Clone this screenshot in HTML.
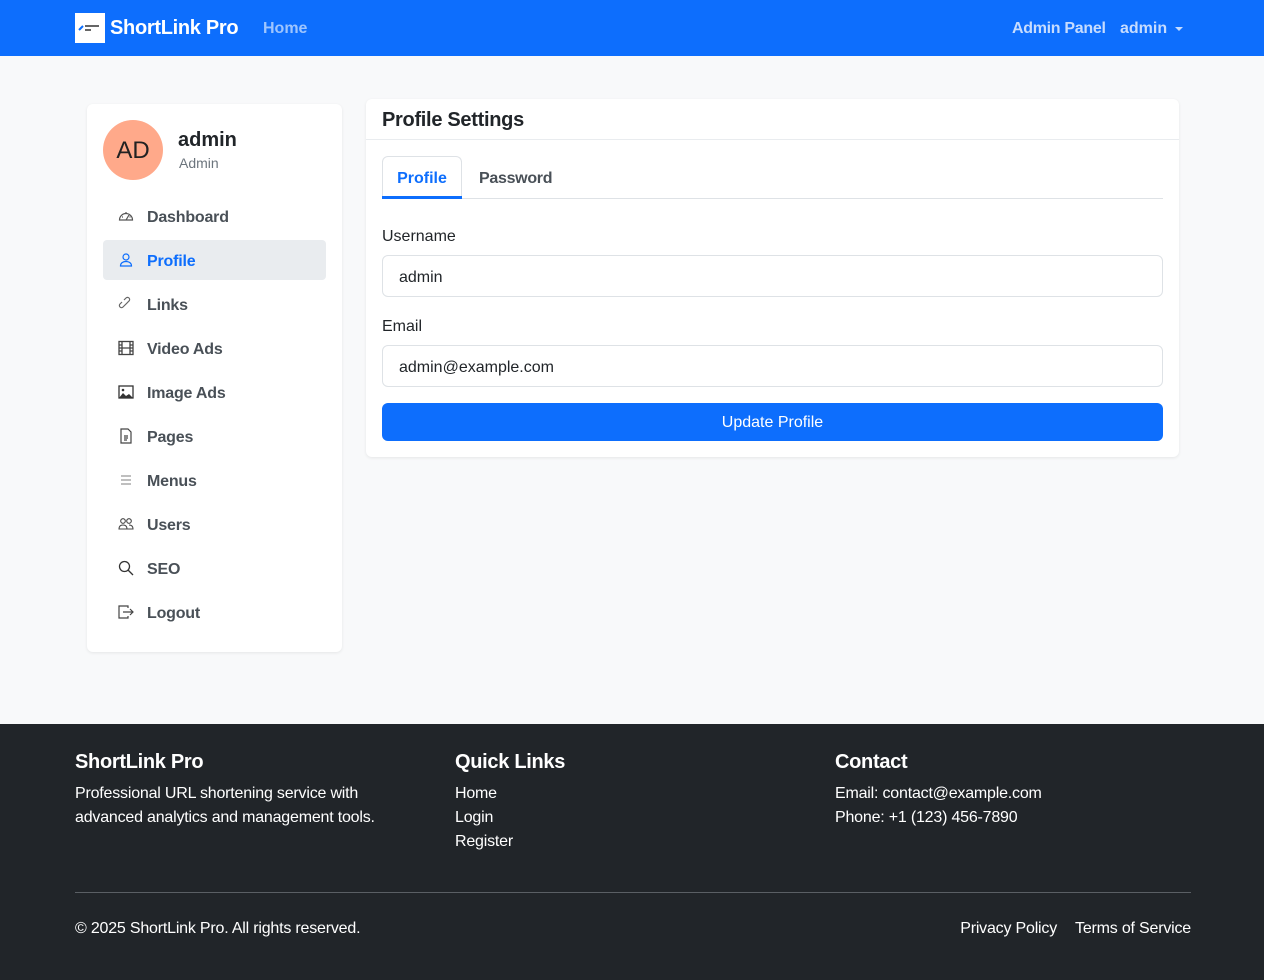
<!DOCTYPE html>
<html><head><meta charset="utf-8"><style>
*{box-sizing:border-box;margin:0;padding:0}
body{width:1264px;height:980px;background:#f8f9fa;font-family:"Liberation Sans",sans-serif;color:#212529;position:relative;overflow:hidden;font-size:16px}
.nav{position:absolute;left:0;top:0;width:1264px;height:56px;background:#0d6efd}
.abs{position:absolute;white-space:nowrap}
.card{position:absolute;background:#fff;border-radius:6px;box-shadow:0 1px 3px rgba(0,0,0,.08)}
.item{position:absolute;left:16px;width:223px;height:40px;border-radius:4px;font-size:16px;font-weight:bold;color:#495057;line-height:44px;padding-left:44px;letter-spacing:-0.2px}
.item svg{position:absolute;left:15px;top:12px}
.input{position:absolute;left:16px;width:781px;height:42px;border:1px solid #dee2e6;border-radius:6px;padding-left:16px;line-height:43px;font-size:16px}
.foot{position:absolute;left:0;top:724px;width:1264px;height:256px;background:#212529;color:#fff}
.foot .abs{font-size:16px;letter-spacing:-0.2px}
.foot h5{position:absolute;font-size:20px;font-weight:bold;letter-spacing:-0.3px}
</style></head><body>
<div class="nav">
 <div class="abs" style="left:75px;top:13px;width:30px;height:30px;background:#fff"><svg width="30" height="30"><path d="M4 17l4-4" stroke="#0d6efd" stroke-width="2"/><rect x="10" y="12" width="14" height="2" fill="#666"/><rect x="10" y="16" width="6" height="2" fill="#666"/></svg></div>
 <div class="abs" style="left:110px;top:17px;font-size:20px;font-weight:bold;color:#fff;letter-spacing:-0.3px">ShortLink Pro</div>
 <div class="abs" style="left:263px;top:20px;font-size:16px;font-weight:bold;color:#9ec5fe">Home</div>
 <div class="abs" style="left:1012px;top:20px;font-size:16px;font-weight:bold;color:#c6dcfe;letter-spacing:-0.3px">Admin Panel</div>
 <div class="abs" style="left:1120px;top:20px;font-size:16px;font-weight:bold;color:#c6dcfe">admin</div>
 <div class="abs" style="left:1175px;top:27px;border-left:4px solid transparent;border-right:4px solid transparent;border-top:4px solid #c6dcfe"></div>
</div>

<div class="card" style="left:87px;top:104px;width:255px;height:548px">
 <div class="abs" style="left:16px;top:16px;width:60px;height:60px;border-radius:50%;background:#ffa98a;font-size:24px;text-align:center;line-height:62px;color:#222">AD</div>
 <div class="abs" style="left:91px;top:25px;font-size:20px;font-weight:bold">admin</div>
 <div class="abs" style="left:92px;top:51px;font-size:14px;color:#6c757d">Admin</div>
 <div class="item" style="top:92px"><svg width="16" height="16" viewBox="0 0 16 16" fill="none" stroke="#555" stroke-width="1.2"><path d="M1.5 12a6.5 6.5 0 1 1 13 0zM8 12l3-5M4 9h1M11.5 9h1M8 4v1"/></svg>Dashboard</div>
 <div class="item" style="top:136px;background:#e9ecef;color:#0d6efd"><svg width="16" height="16" viewBox="0 0 16 16" fill="none" stroke="#0d6efd" stroke-width="1.2"><circle cx="8" cy="5" r="3"/><path d="M2.5 14c0-3 2.5-4.5 5.5-4.5s5.5 1.5 5.5 4.5z"/></svg>Profile</div>
 <div class="item" style="top:180px"><svg width="16" height="16" viewBox="0 0 16 16" fill="none" stroke="#666" stroke-width="1.2"><path d="M7 9l-2 2a2 2 0 0 1-3-3l2-2M9 7l2-2a2 2 0 0 0-3-3L6 4M6 10l4-4"/></svg>Links</div>
 <div class="item" style="top:224px"><svg width="16" height="16" viewBox="0 0 16 16" fill="none" stroke="#444" stroke-width="1.3"><rect x="1" y="1.5" width="14" height="13"/><path d="M4 1.5v13M12 1.5v13M1 8h14M1 5h3M1 11h3M12 5h3M12 11h3"/></svg>Video Ads</div>
 <div class="item" style="top:268px"><svg width="16" height="16" viewBox="0 0 16 16"><rect x="1" y="2" width="14" height="12" fill="none" stroke="#333" stroke-width="1.3"/><path d="M1 14l4-5 3 3 3-2 4 4z" fill="#333"/><circle cx="5" cy="6" r="1.3" fill="#333"/></svg>Image Ads</div>
 <div class="item" style="top:312px"><svg width="16" height="16" viewBox="0 0 16 16" fill="none" stroke="#444" stroke-width="1.2"><path d="M3 1h7l3 3v11H3zM6 8h4M6 10h4M6 12h3"/></svg>Pages</div>
 <div class="item" style="top:356px"><svg width="16" height="16" viewBox="0 0 16 16" fill="none" stroke="#999" stroke-width="1.2"><path d="M3 4h10M3 8h10M3 12h10"/></svg>Menus</div>
 <div class="item" style="top:400px"><svg width="16" height="16" viewBox="0 0 16 16" fill="none" stroke="#444" stroke-width="1.1"><circle cx="5" cy="5" r="2.3"/><circle cx="11" cy="5" r="2.3"/><path d="M1 13c0-3 2-4 4-4s4 1 4 4zM9 13h6c0-3-2-4-4-4"/></svg>Users</div>
 <div class="item" style="top:444px"><svg width="16" height="16" viewBox="0 0 16 16" fill="none" stroke="#333" stroke-width="1.3"><circle cx="6.5" cy="6.5" r="5"/><path d="M10 10l5 5"/></svg>SEO</div>
 <div class="item" style="top:488px"><svg width="16" height="16" viewBox="0 0 16 16" fill="none" stroke="#444" stroke-width="1.2"><path d="M10 4V2H1v12h9v-2M5 8h10M12 5l3 3-3 3"/></svg>Logout</div>
</div>

<div class="card" style="left:366px;top:99px;width:813px;height:358px">
 <div class="abs" style="left:16px;top:10px;font-size:20px;font-weight:bold;letter-spacing:-0.3px">Profile Settings</div>
 <div class="abs" style="left:0;top:40px;width:813px;border-top:1px solid #e9ecef"></div>
 <div class="abs" style="left:16px;top:57px;width:80px;height:43px;border:1px solid #dee2e6;border-bottom:none;border-radius:6px 6px 0 0;color:#0d6efd;font-weight:bold;text-align:center;line-height:44px">Profile</div>
 <div class="abs" style="left:16px;top:97px;width:80px;height:3px;background:#0d6efd"></div>
 <div class="abs" style="left:113px;top:71px;font-weight:bold;color:#495057;letter-spacing:-0.3px">Password</div>
 <div class="abs" style="left:96px;top:99px;width:701px;border-top:1px solid #dee2e6"></div>
 <div class="abs" style="left:16px;top:129px">Username</div>
 <div class="input" style="top:156px">admin</div>
 <div class="abs" style="left:16px;top:219px">Email</div>
 <div class="input" style="top:246px">admin@example.com</div>
 <div class="abs" style="left:16px;top:304px;width:781px;height:38px;background:#0d6efd;border-radius:6px;color:#fff;text-align:center;line-height:40px">Update Profile</div>
</div>

<div class="foot">
 <h5 style="left:75px;top:27px">ShortLink Pro</h5>
 <div class="abs" style="left:75px;top:58px;line-height:24px">Professional URL shortening service with<br>advanced analytics and management tools.</div>
 <h5 style="left:455px;top:27px">Quick Links</h5>
 <div class="abs" style="left:455px;top:58px;line-height:24px">Home<br>Login<br>Register</div>
 <h5 style="left:835px;top:27px">Contact</h5>
 <div class="abs" style="left:835px;top:58px;line-height:24px">Email: contact@example.com<br>Phone: +1 (123) 456-7890</div>
 <div class="abs" style="left:75px;top:168px;width:1116px;border-top:1px solid #5a5f64"></div>
 <div class="abs" style="left:75px;top:196px">© 2025 ShortLink Pro. All rights reserved.</div>
 <div class="abs" style="right:207px;top:196px">Privacy Policy</div>
 <div class="abs" style="right:73px;top:196px">Terms of Service</div>
</div>
</body></html>
